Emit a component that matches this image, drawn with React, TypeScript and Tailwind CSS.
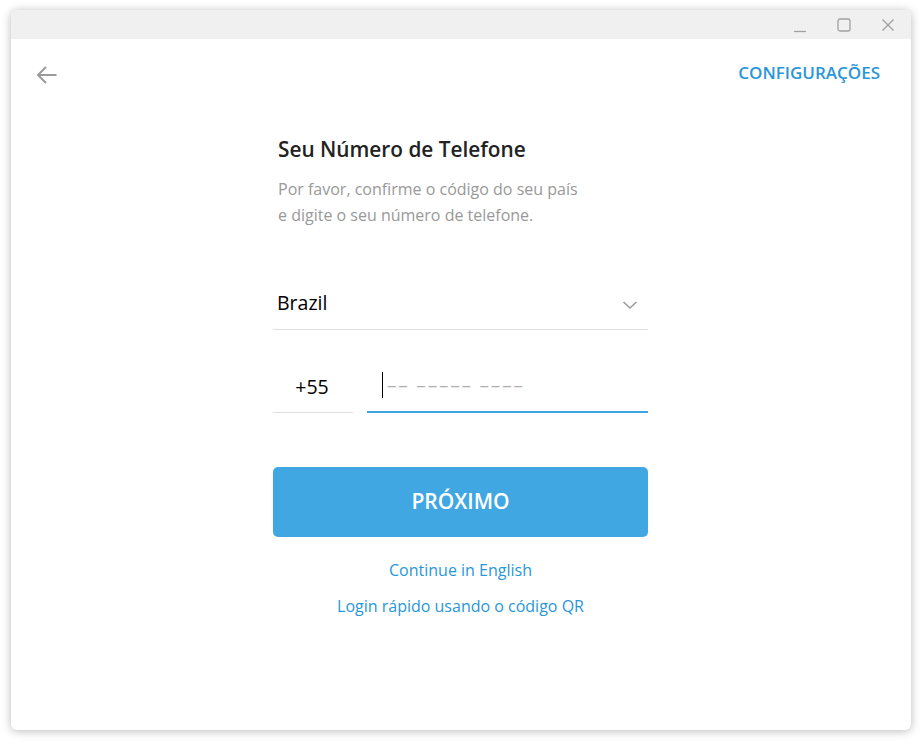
import React from "react";

const font = { fontFamily: '"Open Sans", "Noto Sans", sans-serif' };

const TitleBar = () => (
  <div className="h-[29px] bg-[#f0f0f0] rounded-t-[6px] flex items-center justify-end pr-[16px] gap-[30px]">
    {/* minimize */}
    <svg width="14" height="14" viewBox="0 0 14 14" className="mt-[2px]">
      <path d="M1 12.5h12" stroke="#a0a0a0" strokeWidth="1.3" />
    </svg>
    {/* maximize */}
    <svg width="14" height="14" viewBox="0 0 14 14">
      <rect x="1" y="1" width="12" height="12" rx="2" fill="none" stroke="#a0a0a0" strokeWidth="1.3" />
    </svg>
    {/* close */}
    <svg width="14" height="14" viewBox="0 0 14 14">
      <path d="M1.5 1.5l11 11M12.5 1.5l-11 11" stroke="#a0a0a0" strokeWidth="1.3" />
    </svg>
  </div>
);

export default function App() {
  return (
    <div className="w-[922px] h-[742px] bg-white pl-[11px] pt-[10px]" style={font}>
      <div className="w-[900px] h-[720px] bg-white rounded-[6px] shadow-[0_1px_10px_rgba(0,0,0,0.28)] flex flex-col">
        <TitleBar />

        {/* header row */}
        <div className="h-[68px] flex items-center justify-between pl-[25px] pr-[31px]">
          <svg width="22" height="20" viewBox="0 0 22 20" className="mt-[4px]">
            <path d="M20.5 10H2M10 2L2 10l8 8" fill="none" stroke="#9a9a9a" strokeWidth="2" strokeLinejoin="miter" />
          </svg>
          <span className="text-[17px] font-semibold text-[#2a96d9]">CONFIGURAÇÕES</span>
        </div>

        {/* form column */}
        <div className="w-[375px] ml-[262px] flex flex-col">
          <h1 className="pl-[5px] mt-[28px] text-[20.8px] leading-[28px] font-semibold text-[#222]">
            Seu Número de Telefone
          </h1>
          <p className="pl-[5px] mt-[13px] text-[16px] leading-[26px] text-[#999]">
            Por favor, confirme o código do seu país
            <br />
            e digite o seu número de telefone.
          </p>

          <div className="mt-[48px] h-[54px] border-b border-[#e0e0e0] flex items-center justify-between pl-[4px] pr-[10px]">
            <span className="text-[19.5px] text-black">Brazil</span>
            <svg width="16" height="12" viewBox="0 0 16 12" className="mt-[4px]">
              <path d="M1.5 3l6.5 6 6.5-6" fill="none" stroke="#9a9a9a" strokeWidth="1.6" />
            </svg>
          </div>

          <div className="mt-[31px] flex items-end gap-[14px]">
            <div className="w-[80px] h-[52px] border-b border-[#e0e0e0] flex items-center justify-center">
              <span className="text-[19.5px] text-black mr-[2px]">+55</span>
            </div>
            <div className="flex-1 h-[52px] border-b-2 border-[#3ea5e2] flex items-center pl-[15px]">
              <div className="w-px h-[26px] bg-black mt-[-2px]" />
              <span className="ml-[4px] text-[19px] text-[#b0b0b0] tracking-[1.8px] mt-[-2px]">
                –– ––––– ––––
              </span>
            </div>
          </div>

          <button className="mt-[54px] h-[70px] rounded-[5px] bg-[#40a7e3] text-white text-[21px] font-semibold flex items-center justify-center">
            PRÓXIMO
          </button>

          <div className="mt-[21px] flex flex-col items-center gap-[12px] text-[16px] leading-[24px] text-[#2a96d9]">
            <span>Continue in English</span>
            <span>Login rápido usando o código QR</span>
          </div>
        </div>
      </div>
    </div>
  );
}
